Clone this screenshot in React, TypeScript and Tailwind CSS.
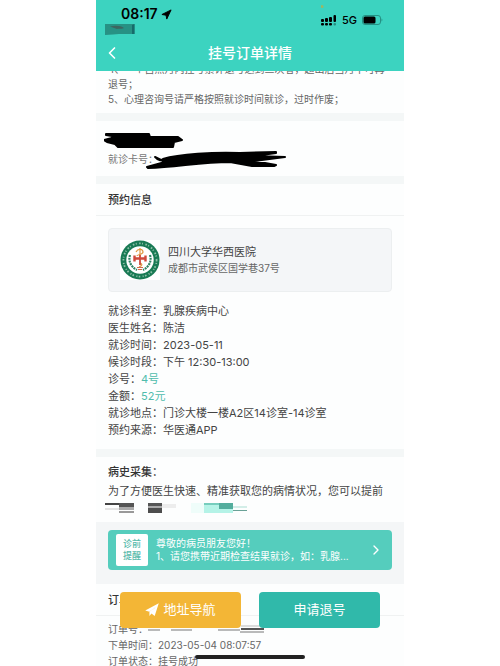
/**
 * Registration order detail page: status bar, order info and bottom actions.
 */
import { ChevronLeft, ChevronRight } from "lucide-react";

const DETAILS = [
  { label: "就诊科室", value: "乳腺疾病中心" },
  { label: "医生姓名", value: "陈洁" },
  { label: "就诊时间", value: "2023-05-11" },
  { label: "候诊时段", value: "下午 12:30-13:00" },
  { label: "诊号", value: "4号", highlight: true },
  { label: "金额", value: "52元", highlight: true },
  { label: "就诊地点", value: "门诊大楼一楼A2区14诊室-14诊室" },
  { label: "预约来源", value: "华医通APP" },
];

function NavArrow({ className }: { className: string }) {
  return (
    <svg viewBox="0 0 12 12" className={className} fill="currentColor" aria-hidden="true">
      <path d="M11.8.2.2 6.400l3.600 1.200L9 3.500 5 8.500l3.300 2.700z" />
      <path d="M9.500 2.500 3.800 7.600v3.600l1.800-2.300z" />
    </svg>
  );
}

function StatusBar() {
  return (
    <div className="flex items-start justify-between pl-[25px] pr-[21px] pt-[5px] text-black">
      <div>
        <div className="flex items-center gap-[3px] text-sm font-semibold leading-[18px]">
          08:17
          <svg viewBox="0 0 12 12" className="h-[11px] w-[11px]" aria-hidden="true">
            <path d="M11 1 1 6l4.500.8L6.300 11z" fill="#000" stroke="#000" strokeLinejoin="round" />
          </svg>
        </div>
        <svg viewBox="0 0 30 12" className="-ml-4 h-3 w-[30px]" aria-hidden="true">
          <path d="M0 1h29.5v10H14l-6 .5-8 .5z" fill="#279184" />
          <path d="M5 3.500c5-1.500 11-1 14 1.500-2 1.500-5 0-7 1z" fill="#3d6660" />
          <path d="M27 2l2.500-1v10H27z" fill="#176b6b" />
        </svg>
      </div>
      <div className="flex items-center gap-[5px] pt-[6px]">
        <svg viewBox="0 0 16 22" className="-mt-2 h-[22px] w-4" aria-hidden="true">
          <circle cx="1" cy="1.5" r="1.5" fill="#9bb765" />
          <g fill="#000">
            <rect x="0" y="14" width="3" height="3" rx="1" />
            <rect x="4" y="13" width="3" height="4" rx="1" />
            <rect x="8" y="12" width="3" height="5" rx="1" />
            <rect x="12.5" y="10" width="2.5" height="7" rx="1" />
            <rect x="0" y="18" width="3" height="2.5" rx="1" />
            <rect x="4" y="18" width="3" height="2.5" rx="1" />
            <rect x="8" y="18" width="3" height="2.5" rx="1" />
          </g>
          <rect x="12.5" y="18" width="2.5" height="2.5" rx="1" fill="#268c80" />
        </svg>
        <span className="text-[11px] font-medium leading-[18px]">5G</span>
        <svg viewBox="0 0 21 10" className="h-[10px] w-[21px]" aria-hidden="true">
          <rect x=".5" y=".5" width="18" height="9" rx="2.5" fill="none" stroke="#249184" />
          <rect x="1.5" y="1.5" width="12" height="7" rx="1.5" fill="#000" />
          <path d="M19.5 3.500v3c1-.3 1.300-2.700 0-3z" fill="#249184" />
        </svg>
      </div>
    </div>
  );
}

function HospitalLogo() {
  return (
    <svg viewBox="0 0 40 40" className="h-10 w-10 shrink-0 bg-white" role="img" aria-label="四川大学华西医院">
      <circle cx="20" cy="20" r="19.5" fill="#197a54" />
      <circle cx="20" cy="20" r="16.6" fill="none" stroke="#8fc0a8" strokeWidth="1.8" strokeDasharray="1.6 1.4 1 2.4" />
      <circle cx="20" cy="20" r="13.7" fill="#fff" />
      <g fill="none" stroke="#2e8363" strokeWidth="2.2" strokeDasharray="2 .8">
        <path d="M10 15c-2 6 1 12 7 15" />
        <path d="M30 15c2 6-1 12-7 15" />
      </g>
      <g fill="none" stroke="#e09a43" strokeWidth="1.2">
        <path d="M20 8v9" />
        <path d="M16 12c2-4 7-3 7 0s-6 2-6 4" />
        <path d="M20 23c3 1 2 3-1 4" />
      </g>
      <path d="M14.500 15.500v6M25.500 15.500v6M14.500 18.500h11" fill="none" stroke="#cf4a3c" strokeWidth="2.4" />
      <path d="M20 15v10" stroke="#cf4a3c" strokeWidth="1.8" />
      <path d="M17 27.500h6M18 29.500h4" stroke="#cf6b4c" />
    </svg>
  );
}

function Mosaic() {
  return (
    <svg viewBox="0 0 142 10" className="-ml-[3px] mt-[2px] h-[10px] w-[142px]" aria-hidden="true">
      <rect width="14" height="2" fill="#444" />
      <rect y="5" width="14" height="2" fill="#e4e4e4" />
      <rect x="14" width="15" height="4" fill="#555" />
      <rect x="14" y="4" width="15" height="3" fill="#aaa" />
      <rect x="14" y="8" width="15" height="2" fill="#999" />
      <rect x="43" width="14" height="3" fill="#555" />
      <rect x="43" y="3" width="14" height="2" fill="#aaa" />
      <rect x="43" y="5" width="14" height="5" fill="#4d4d4d" />
      <rect x="57" y="1" width="14" height="4" fill="#ededed" />
      <rect x="86" width="14" height="10" fill="#effdfa" />
      <rect x="99" width="15" height="10" fill="#b5f3e7" />
      <rect x="99" width="15" height="2" fill="#76cdbd" />
      <rect x="114" width="14" height="6" fill="#54ad9d" />
      <rect x="114" y="6" width="14" height="4" fill="#b5f3e7" />
      <rect x="128" y="3" width="14" height="2" fill="#d3eee8" />
      <rect x="128" y="7" width="14" height="1" fill="#6aa297" />
    </svg>
  );
}

export default function App() {
  return (
    <div className="h-screen overflow-hidden bg-white px-24 font-['Inter','Noto_Sans_CJK_SC',sans-serif] text-[#444]">
      <main className="relative h-full overflow-hidden bg-[#fdfefe]">
        <header className="relative z-10 h-[71px] bg-[#3cd3c0]">
          <StatusBar />
          <div className="grid grid-cols-[20px_1fr_20px] items-center px-[10px] pt-2 text-white">
            <button type="button" aria-label="返回" className="-ml-1">
              <ChevronLeft className="h-5 w-5" strokeWidth={2} />
            </button>
            <h1 className="text-center text-sm font-medium leading-5">挂号订单详情</h1>
          </div>
        </header>

        <section className="-mt-[9px] px-3 pb-[6px] text-[10px] leading-[15px] text-[#666]">
          <p>
            4、一个自然月内挂号累计退号达到三次者，超出后当月不可再
            <br />
            退号；
          </p>
          <p>5、心理咨询号请严格按照就诊时间就诊，过时作废；</p>
        </section>

        <section className="border-y-8 border-[#f4f7f7] px-3 pb-[9px] pt-[30px] text-[10px] leading-4 text-[#777]">
          <div className="relative">
            就诊卡号：
            <svg viewBox="0 0 190 40" className="absolute -left-1 -top-[22px] h-10 w-[190px]" aria-hidden="true">
              <g stroke="#000" strokeWidth="2" strokeLinecap="round" strokeLinejoin="round">
                <path d="M2 5h43l1 3h28l4 3-8 2-1 5H14l-3-3-8-2-3-2 8-2V7L2 6z" />
                <path d="M51 28q4 5 8 2C75 25 110 23 136 24l36-1v1l-22 3 31 1-31 4 22 4-2 1h-22l-22-4C96 33 74 38 44 39l-1-1 18-5z" />
              </g>
            </svg>
          </div>
        </section>

        <section>
          <h2 className="border-b border-[#f0f2f2] px-3 pb-[7px] pt-2 text-[11px] font-medium leading-4 text-[#333]">
            预约信息
          </h2>
          <div className="px-3 pb-[11px] pt-3">
            <div className="flex items-center gap-2 rounded border border-[#eceff0] bg-[#f4f6f8] px-[11px] py-[11px]">
              <HospitalLogo />
              <div>
                <p className="text-[11px] leading-4">四川大学华西医院</p>
                <p className="text-[10px] leading-4 text-[#666]">成都市武侯区国学巷37号</p>
              </div>
            </div>
          </div>
          <dl className="px-3 pb-[10px] text-[11px] leading-[17px]">
            {DETAILS.map((item) => (
              <div key={item.label} className="flex">
                <dt>{item.label}：</dt>
                <dd className={item.highlight ? "text-[#4fbcac]" : ""}>{item.value}</dd>
              </div>
            ))}
          </dl>
        </section>

        <section className="border-t-8 border-[#f4f7f7] px-3 pb-[9px] pt-[6px] text-[11px] leading-[19px]">
          <h2 className="font-medium text-[#333]">病史采集：</h2>
          <p className="whitespace-nowrap">为了方便医生快速、精准获取您的病情状况，您可以提前</p>
          <Mosaic />
        </section>

        <section className="bg-[#f4f6f7] px-3 pb-[14px] pt-2">
          <a href="#notice" className="flex items-center gap-2 rounded bg-[#55cdbd] px-2 py-1 text-white">
            <span className="shrink-0 rounded-xs bg-white px-[7px] py-1 text-[9px] font-medium leading-3 text-[#55b9aa]">
              诊前
              <br />
              提醒
            </span>
            <span className="min-w-0 flex-1 text-[10px] leading-[13px]">
              尊敬的病员朋友您好！
              <br />
              1、请您携带近期检查结果就诊，如：乳腺...
            </span>
            <ChevronRight className="h-4 w-4 shrink-0" strokeWidth={2} />
          </a>
        </section>

        <section className="text-[10px] leading-4 text-[#666]">
          <h2 className="border-b border-[#f0f2f2] px-3 pb-[7px] pt-2 text-[11px] font-medium text-[#333]">订单信息</h2>
          <div className="px-3 pt-[5px]">
            <div className="flex items-center">
              订单号：
              <svg viewBox="0 0 118 8" className="h-2 w-[118px]" aria-hidden="true">
                <path d="M0 5h12M23 5h21M70 5h22M92 7h24" stroke="#777" />
                <path d="M0 2h12M47 2h12M70 1h22M93 1h23" stroke="#bbb" />
                <path d="M93 4h23" stroke="#555" strokeWidth="2" />
              </svg>
            </div>
            <p>下单时间：2023-05-04 08:07:57</p>
            <p>订单状态：挂号成功</p>
          </div>
        </section>

        {/* Floating actions over the scrolled order info */}
        <div className="absolute inset-x-0 bottom-[38px] flex gap-[18px] px-6 text-[13px] text-white">
          <button type="button" className="flex h-9 flex-1 items-center justify-center gap-1 rounded bg-[#f3b636]">
            <NavArrow className="h-[14px] w-[14px]" />
            地址导航
          </button>
          <button type="button" className="h-9 flex-1 rounded bg-[#30b9aa]">
            申请退号
          </button>
        </div>
        <div className="absolute bottom-[7px] left-1/2 h-1 w-[110px] -translate-x-1/2 rounded-full bg-[#222]" />
      </main>
    </div>
  );
}
